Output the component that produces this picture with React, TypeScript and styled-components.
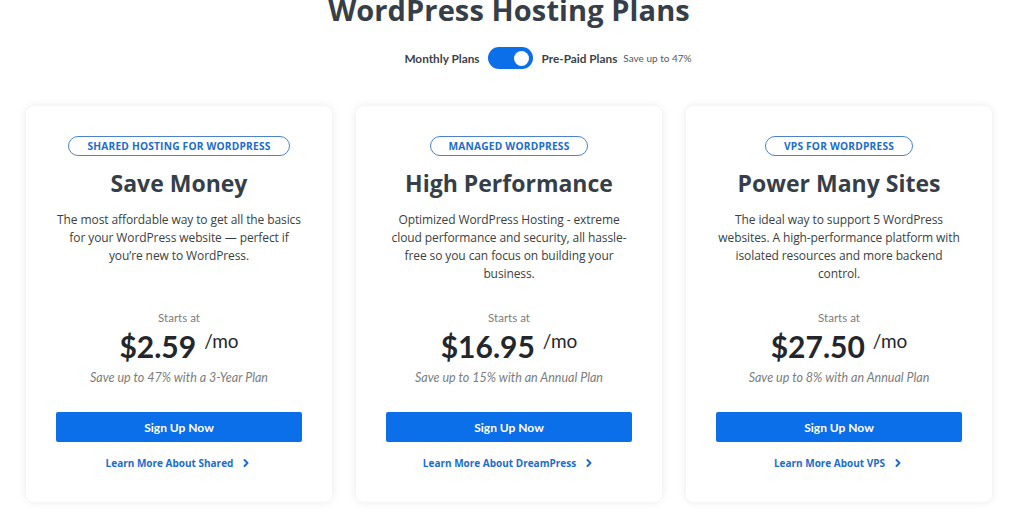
import React, {FC} from 'react';
import styled, {createGlobalStyle} from "styled-components";
import {ChevronRight} from "lucide-react";

const MAIN_BLUE_COLOR = "#0a6fe8";
const LINK_BLUE_COLOR = "#1b6dcc";
const HEADING_COLOR = "#363f48";
const TEXT_COLOR = "#3a3f44";
const GRAY_TEXT_COLOR = "#7a7d80";

interface IPlan {
    badge: string
    title: string
    description: string
    price: string
    save: string
    link: string
}

const plans: IPlan[] = [
    {
        badge: "Shared Hosting for WordPress",
        title: "Save Money",
        description: "The most affordable way to get all the basics for your WordPress website — perfect if you’re new to WordPress.",
        price: "$2.59",
        save: "Save up to 47% with a 3-Year Plan",
        link: "Learn More About Shared",
    },
    {
        badge: "Managed WordPress",
        title: "High Performance",
        description: "Optimized WordPress Hosting - extreme cloud performance and security, all hassle-free so you can focus on building your business.",
        price: "$16.95",
        save: "Save up to 15% with an Annual Plan",
        link: "Learn More About DreamPress",
    },
    {
        badge: "VPS for WordPress",
        title: "Power Many Sites",
        description: "The ideal way to support 5 WordPress websites. A high-performance platform with isolated resources and more backend control.",
        price: "$27.50",
        save: "Save up to 8% with an Annual Plan",
        link: "Learn More About VPS",
    },
]

const PlanCard: FC<IPlan> = ({badge, title, description, price, save, link}) => {
    return (
        <Card>
            <Badge>{badge}</Badge>
            <CardTitle>{title}</CardTitle>
            <Description>{description}</Description>
            <StartsAt>Starts at</StartsAt>
            <PriceRow>
                <Price>{price}</Price>
                <PerMonth>/mo</PerMonth>
            </PriceRow>
            <SaveText>{save}</SaveText>
            <SignUpButton>Sign Up Now</SignUpButton>
            <LearnMore href="#">
                {link}
                <ChevronRight size={12} strokeWidth={4}/>
            </LearnMore>
        </Card>
    )
}

const App: FC = () => {
    return (
        <>
            <GlobalStyle/>
            <Page>
                <PageTitle>WordPress Hosting Plans</PageTitle>
                <ToggleRow>
                    <ToggleLabel>Monthly Plans</ToggleLabel>
                    <Switch>
                        <Knob/>
                    </Switch>
                    <ToggleLabel>Pre-Paid Plans</ToggleLabel>
                    <ToggleNote>Save up to 47%</ToggleNote>
                </ToggleRow>
                <Cards>
                    {plans.map(plan => <PlanCard key={plan.title} {...plan}/>)}
                </Cards>
            </Page>
        </>
    );
};

export default App;

const GlobalStyle = createGlobalStyle`
  * {
    box-sizing: border-box;
  }

  body {
    margin: 0;
    background: #ffffff;
    font-family: "Open Sans", "Noto Sans", sans-serif;
    overflow: hidden;
  }
`
const Page = styled.div`
  width: 1024px;
  height: 513px;
  padding-right: 6px;
  display: flex;
  flex-direction: column;
  align-items: center;
`
const PageTitle = styled.h1`
  margin: -5px 0 0 0;
  font-size: 29px;
  line-height: 30px;
  font-weight: 700;
  color: ${HEADING_COLOR};
  letter-spacing: 0.1px;
`
const ToggleRow = styled.div`
  display: flex;
  align-items: center;
  margin-top: 22px;
  margin-left: 78px;
  height: 22px;
`
const ToggleLabel = styled.span`
  font-family: "Lato", sans-serif;
  font-size: 11.8px;
  font-weight: 700;
  color: #3d4247;
`
const ToggleNote = styled.span`
  font-family: "Lato", sans-serif;
  font-size: 10px;
  color: #55595d;
  margin-left: 6px;
`
const Switch = styled.div`
  width: 45px;
  height: 22px;
  border-radius: 11px;
  background: ${MAIN_BLUE_COLOR};
  margin: 0 9px 0 8px;
  display: flex;
  align-items: center;
  justify-content: flex-end;
  padding-right: 4px;
`
const Knob = styled.div`
  width: 15px;
  height: 15px;
  border-radius: 50%;
  background: #ffffff;
`
const Cards = styled.div`
  display: grid;
  grid-template-columns: repeat(3, 306px);
  gap: 24px;
  margin-top: 37px;
`
const Card = styled.div`
  height: 396px;
  background: #ffffff;
  border-radius: 8px;
  box-shadow: 0 0 8px rgba(0, 0, 0, 0.09);
  padding: 30px 30px 0 30px;
  display: flex;
  flex-direction: column;
  align-items: center;
  text-align: center;
`
const Badge = styled.div`
  height: 20px;
  padding: 0 18px;
  border: 1px solid #4a83c9;
  border-radius: 10px;
  display: flex;
  align-items: center;
  font-size: 10.2px;
  font-weight: 700;
  text-transform: uppercase;
  color: ${LINK_BLUE_COLOR};
  letter-spacing: 0.2px;
`
const CardTitle = styled.h2`
  margin: 13px 0 0 0;
  font-size: 23px;
  line-height: 28px;
  font-weight: 700;
  color: ${HEADING_COLOR};
`
const Description = styled.p`
  margin: 14px -1px 0 -1px;
  height: 72px;
  font-size: 12px;
  line-height: 18px;
  letter-spacing: -0.1px;
  color: ${TEXT_COLOR};
`
const StartsAt = styled.div`
  margin-top: 27px;
  font-family: "Lato", sans-serif;
  font-size: 11.5px;
  line-height: 16px;
  color: ${GRAY_TEXT_COLOR};
`
const PriceRow = styled.div`
  display: flex;
  align-items: flex-start;
  gap: 8px;
  margin-top: 2px;
  height: 36px;
`
const Price = styled.span`
  font-family: "Lato", sans-serif;
  font-size: 30px;
  line-height: 36px;
  font-weight: 700;
  color: #23272b;
`
const PerMonth = styled.span`
  font-family: "Lato", sans-serif;
  font-size: 19px;
  line-height: 26px;
  color: #23272b;
`
const SaveText = styled.div`
  margin-top: 6px;
  font-family: "Lato", sans-serif;
  font-style: italic;
  font-size: 12.5px;
  line-height: 16px;
  color: ${GRAY_TEXT_COLOR};
`
const SignUpButton = styled.button`
  margin-top: 26px;
  width: 100%;
  height: 30px;
  border: none;
  border-radius: 2px;
  background: ${MAIN_BLUE_COLOR};
  color: #ffffff;
  font-family: "Lato", sans-serif;
  font-size: 12px;
  font-weight: 700;
  cursor: pointer;
`
const LearnMore = styled.a`
  margin-top: 13px;
  display: flex;
  align-items: center;
  gap: 7px;
  font-size: 10px;
  line-height: 16px;
  font-weight: 700;
  color: ${LINK_BLUE_COLOR};
  text-decoration: none;
`
